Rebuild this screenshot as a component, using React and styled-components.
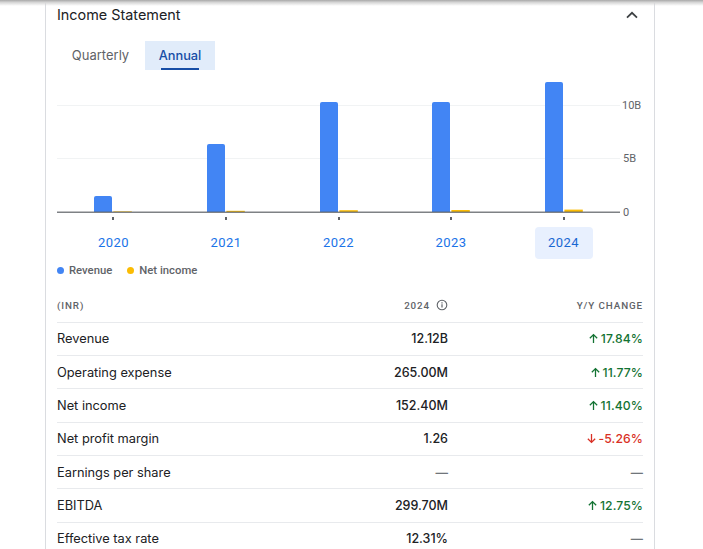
import React from 'react';
import styled, { createGlobalStyle } from 'styled-components';

const years = [
  { year: '2020', x: 37, top: 196, net: 211.4 },
  { year: '2021', x: 150, top: 144, net: 210.8 },
  { year: '2022', x: 263, top: 102, net: 210.2 },
  { year: '2023', x: 375, top: 102, net: 210 },
  { year: '2024', x: 488, top: 82, net: 209.6, active: true },
];

const rows = [
  { label: 'Revenue', value: '12.12B', change: '17.84%', dir: 'up' },
  { label: 'Operating expense', value: '265.00M', change: '11.77%', dir: 'up' },
  { label: 'Net income', value: '152.40M', change: '11.40%', dir: 'up' },
  { label: 'Net profit margin', value: '1.26', change: '-5.26%', dir: 'down' },
  { label: 'Earnings per share', value: '—', change: '—' },
  { label: 'EBITDA', value: '299.70M', change: '12.75%', dir: 'up' },
  { label: 'Effective tax rate', value: '12.31%', change: '—' },
];

const PLOT_TOP = 78;

const Chart = () => (
  <ChartSvg width="586" height="144" viewBox="0 0 586 144">
    <g transform={`translate(0 ${-PLOT_TOP})`}>
      <line x1="0" x2="563" y1="105.5" y2="105.5" stroke="#f1f3f4" />
      <line x1="0" x2="563" y1="158.5" y2="158.5" stroke="#f1f3f4" />
      {years.map((y) => (
        <g key={y.year}>
          <path
            d={`M${y.x} 212V${y.top + 2}a2 2 0 0 1 2 -2h14a2 2 0 0 1 2 2V212z`}
            fill="#4285f4"
          />
          <rect x={y.x + 19.4} y={y.net} width="18.4" height={212 - y.net} fill="#fbbc04" />
          <rect x={y.x + 18} y="217" width="2" height="3" fill="#5f6368" />
        </g>
      ))}
      <rect x="0" y="211.6" width="563" height="1.2" fill="#5f6368" />
      <AxisLabel x="565" y="108.8">10B</AxisLabel>
      <AxisLabel x="566" y="161.8">5B</AxisLabel>
      <AxisLabel x="566" y="216">0</AxisLabel>
    </g>
  </ChartSvg>
);

const Arrow = ({ dir }) => (
  <ArrowIcon width="11" height="11" viewBox="0 0 12 12" fill="none" stroke="currentColor" strokeWidth="1.4">
    {dir === 'up' ? <path d="M6 11V2M2 5.8 6 1.8l4 4" /> : <path d="M6 1v9M2 6.2l4 4 4-4" />}
  </ArrowIcon>
);

export default function App() {
  return (
    <>
      <GlobalStyle />
      <TopShadow />
      <Card>
        <Header>
          <Title>Income Statement</Title>
          <svg width="16" height="16" viewBox="0 0 16 16" fill="none" stroke="#3c4043" strokeWidth="1.8">
            <path d="M3 10.6 8 5.8l5 4.8" />
          </svg>
        </Header>
        <Tabs>
          <Tab>Quarterly</Tab>
          <Tab $active>Annual</Tab>
        </Tabs>
        <Chart />
        <YearRow>
          {years.map((y) => (
            <Year key={y.year} $active={y.active}>{y.year}</Year>
          ))}
        </YearRow>
        <Legend>
          <LegendItem $color="#4285f4">Revenue</LegendItem>
          <LegendItem $color="#fbbc04">Net income</LegendItem>
        </Legend>
        <TableHead>
          <span>(INR)</span>
          <HeadValue>
            2024
            <svg width="12" height="12" viewBox="0 0 12 12" fill="none" stroke="#5f6368">
              <circle cx="6" cy="6" r="4.8" strokeWidth="1.1" />
              <path d="M6 5.3v3.2" strokeWidth="1.2" />
              <path d="M6 3.2v1.2" strokeWidth="1.2" />
            </svg>
          </HeadValue>
          <HeadChange>Y/Y CHANGE</HeadChange>
        </TableHead>
        {rows.map((r) => (
          <Row key={r.label}>
            <Label>{r.label}</Label>
            <Value $empty={r.value === '—'}>{r.value}</Value>
            <Change $dir={r.dir}>
              {r.dir && <Arrow dir={r.dir} />}
              {r.change}
            </Change>
          </Row>
        ))}
      </Card>
    </>
  );
}

const GlobalStyle = createGlobalStyle`
  html, body {
    margin: 0;
    height: 100%;
    overflow: hidden;
    background: #fff;
  }
  body {
    font-family: "Inter", "Liberation Sans", sans-serif;
  }
`;

const TopShadow = styled.div`
  position: fixed;
  top: 0;
  left: 0;
  right: 0;
  height: 6px;
  background: linear-gradient(#a8a8a8, #d6d6d6 40%, #ffffff00);
  z-index: 2;
`;

const Card = styled.div`
  box-sizing: border-box;
  width: 610px;
  height: 549px;
  margin-left: 45px;
  padding: 0 11px 0 11px;
  border-left: 1px solid #dadce0;
  border-right: 1px solid #dadce0;
  overflow: hidden;
`;

const Header = styled.div`
  display: flex;
  align-items: center;
  justify-content: space-between;
  height: 29px;
  padding-right: 3px;
`;

const Title = styled.h2`
  margin: 0;
  font-size: 14.4px;
  font-weight: 400;
  color: #202124;
`;

const Tabs = styled.div`
  display: flex;
  margin: 12px 0 0 0;
  height: 29px;
`;

const Tab = styled.div`
  position: relative;
  display: flex;
  align-items: center;
  justify-content: center;
  box-sizing: border-box;
  width: ${(p) => (p.$active ? '70px' : '88px')};
  font-size: ${(p) => (p.$active ? '12.8px' : '13px')};
  padding-bottom: 1px;
  padding-right: ${(p) => (p.$active ? 0 : '1px')};
  font-weight: ${(p) => (p.$active ? 500 : 400)};
  color: ${(p) => (p.$active ? '#174ea6' : '#5f6368')};
  background: ${(p) => (p.$active ? '#e1ecfa' : 'transparent')};

  ${(p) =>
    p.$active &&
    `&::after {
      content: '';
      position: absolute;
      left: 16px;
      right: 16px;
      bottom: 0;
      height: 2px;
      background: #174ea6;
    }`}
`;

const ChartSvg = styled.svg`
  display: block;
  margin-top: 8px;
`;

const AxisLabel = styled.text`
  font-family: "Roboto", sans-serif;
  font-size: 11px;
  fill: #5f6368;
`;

const YearRow = styled.div`
  display: flex;
  height: 32px;
  margin-top: 5px;
  padding-left: 27.5px;
`;

const Year = styled.div`
  box-sizing: border-box;
  width: 58px;
  margin-right: 54.5px;
  display: flex;
  align-items: center;
  justify-content: center;
  border-radius: 4px;
  padding-bottom: 2px;
  font-family: "Roboto", sans-serif;
  font-size: 13px;
  font-weight: 400;
  letter-spacing: 0.4px;
  color: ${(p) => (p.$active ? '#1967d2' : '#1a73e8')};
  background: ${(p) => (p.$active ? '#e8f0fe' : 'transparent')};

  &:last-child {
    margin-right: 0;
  }
`;

const Legend = styled.div`
  display: flex;
  gap: 15px;
  margin-top: 2px;
  height: 18px;
  align-items: center;
`;

const LegendItem = styled.span`
  display: flex;
  align-items: center;
  gap: 5px;
  font-family: "Roboto", sans-serif;
  font-size: 11.3px;
  font-weight: 500;
  color: #5f6368;

  &::before {
    content: '';
    width: 7px;
    height: 7px;
    border-radius: 50%;
    background: ${(p) => p.$color};
  }
`;

const TableHead = styled.div`
  display: grid;
  grid-template-columns: 1fr 100px 195px;
  align-items: center;
  height: 43.8px;
  box-sizing: border-box;
  padding-top: 10px;
  border-bottom: 1px solid #e8eaed;
  font-family: "Roboto", sans-serif;
  font-size: 9.8px;
  font-weight: 500;
  letter-spacing: 0.9px;
  color: #5f6368;
`;

const HeadValue = styled.span`
  display: flex;
  align-items: center;
  justify-content: flex-end;
  gap: 6px;
`;

const HeadChange = styled.span`
  text-align: right;
`;

const Row = styled.div`
  display: grid;
  grid-template-columns: 1fr 100px 195px;
  align-items: center;
  box-sizing: border-box;
  height: 33.3px;
  border-bottom: 1px solid #e8eaed;
  font-size: 12.8px;
  color: #202124;
`;

const Label = styled.span`
  font-weight: 400;
`;

const Value = styled.span`
  text-align: right;
  font-size: 12.5px;
  font-weight: ${(p) => (p.$empty ? 600 : 480)};
  color: ${(p) => (p.$empty ? '#70757a' : '#202124')};
`;

const Change = styled.span`
  display: flex;
  align-items: center;
  justify-content: flex-end;
  gap: 1.5px;
  font-size: 12.2px;
  font-weight: ${(p) => (p.$dir ? 480 : 600)};
  letter-spacing: 0.1px;
  color: ${(p) => (p.$dir === 'up' ? '#137333' : p.$dir === 'down' ? '#d93025' : '#70757a')};
`;

const ArrowIcon = styled.svg`
  flex: none;
`;
